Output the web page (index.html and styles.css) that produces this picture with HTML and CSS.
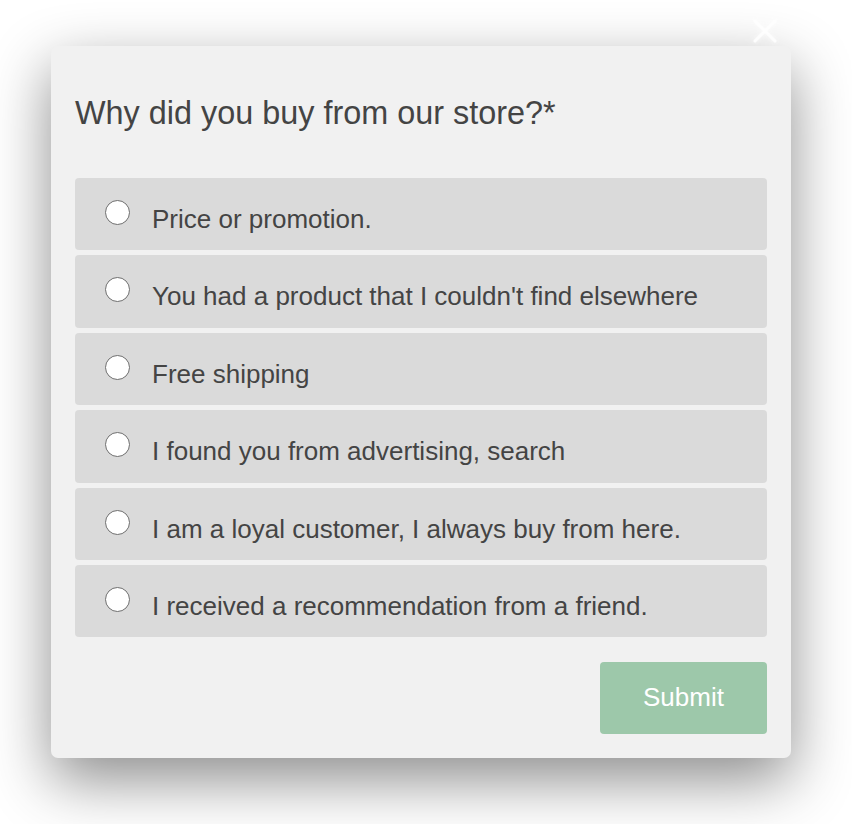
FILE: index.html
```html
<!DOCTYPE html>
<html lang="en">
<head>
  <meta charset="UTF-8">
  <meta name="viewport" content="width=device-width, initial-scale=1.0">
  <title>Survey</title>
  <link rel="stylesheet" href="styles.css">
</head>
<body>

  <div class="popup">
    <button class="close" aria-label="Close">
      <svg width="24" height="24" viewBox="0 0 24 24">
        <path d="M2 2 L22 22 M22 2 L2 22" stroke="#fff" stroke-width="3" stroke-linecap="round" fill="none"/>
      </svg>
    </button>

    <h2 class="question">Why did you buy from our store?*</h2>

    <div class="options">
      <label class="option"><span class="radio"></span><span class="label">Price or promotion.</span></label>
      <label class="option"><span class="radio"></span><span class="label">You had a product that I couldn't find elsewhere</span></label>
      <label class="option"><span class="radio"></span><span class="label">Free shipping</span></label>
      <label class="option"><span class="radio"></span><span class="label">I found you from advertising, search</span></label>
      <label class="option"><span class="radio"></span><span class="label">I am a loyal customer, I always buy from here.</span></label>
      <label class="option"><span class="radio"></span><span class="label">I received a recommendation from a friend.</span></label>
    </div>

    <div class="actions">
      <button class="submit">Submit</button>
    </div>
  </div>

</body>
</html>
```

FILE: styles.css
```css
body {
  margin: 0;
  padding: 46px 0 0 51px;
  background-color: #ffffff;
  font-family: "Liberation Sans", Arial, Helvetica, sans-serif;
  overflow: hidden;
  height: 824px;
  box-sizing: border-box;
}

.popup {
  position: relative;
  width: 740px;
  box-sizing: border-box;
  padding: 24px;
  background-color: #f1f1f1;
  border-radius: 7px;
  box-shadow: 0 22px 60px rgba(0, 0, 0, 0.45);
}

.close {
  position: absolute;
  top: -27px;
  right: 14px;
  width: 24px;
  height: 24px;
  padding: 0;
  border: none;
  background: none;
  cursor: pointer;
  opacity: 0.9;
}

.close svg {
  display: block;
  filter: drop-shadow(0 0 2px rgba(255, 255, 255, 0.8));
}

.question {
  margin: 25px 0 46px;
  font-size: 32.4px;
  line-height: 37px;
  font-weight: normal;
  color: #444;
}

.options {
  display: flex;
  flex-direction: column;
  gap: 5px;
}

.option {
  display: flex;
  align-items: flex-start;
  gap: 22px;
  height: 72.4px;
  box-sizing: border-box;
  padding: 22px 20px 0 30px;
  background-color: #dadada;
  border-radius: 4px;
  cursor: pointer;
}

.radio {
  flex: none;
  width: 25px;
  height: 25px;
  box-sizing: border-box;
  border: 1.5px solid #6e6e6e;
  border-radius: 50%;
  background-color: #fff;
}

.label {
  margin-top: 4px;
  font-size: 26px;
  line-height: 30px;
  color: #444;
}

.actions {
  display: flex;
  justify-content: flex-end;
  margin-top: 24.6px;
}

.submit {
  width: 167px;
  height: 72px;
  border: none;
  border-radius: 4px;
  background-color: #9dc8aa;
  color: #fff;
  font-family: inherit;
  font-size: 26px;
  cursor: pointer;
}
```
